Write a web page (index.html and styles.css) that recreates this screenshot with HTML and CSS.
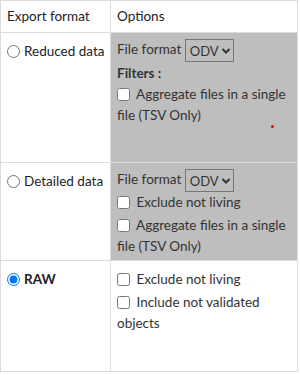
FILE: index.html
```html
<!DOCTYPE html>
<html lang="en">
<head>
    <meta charset="UTF-8">
    <meta name="viewport" content="width=device-width, initial-scale=1.0">
    <title>Export</title>
    <link rel="stylesheet" href="styles.css">
</head>
<body>
    <table class="export-table">
        <thead>
            <tr class="head-row">
                <th class="col-format">Export format</th>
                <th>Options</th>
            </tr>
        </thead>
        <tbody>
            <tr class="row-reduced">
                <td><label class="choice"><input type="radio" name="fmt"> Reduced data</label></td>
                <td class="options disabled">
                    <div class="line">File format
                        <span class="select-wrap">
                            <select><option>ODV</option></select>
                            <svg class="chevron" width="10" height="8" viewBox="0 0 10 8"><path d="M1.5 2 L5 5.5 L8.5 2" fill="none" stroke="#333" stroke-width="2"/></svg>
                        </span>
                    </div>
                    <div class="line filters">Filters :</div>
                    <label class="line check"><input type="checkbox"> Aggregate files in a single file (TSV Only)</label>
                    <span class="dot"></span>
                </td>
            </tr>
            <tr class="row-detailed">
                <td><label class="choice"><input type="radio" name="fmt"> Detailed data</label></td>
                <td class="options disabled">
                    <div class="line">File format
                        <span class="select-wrap">
                            <select><option>ODV</option></select>
                            <svg class="chevron" width="10" height="8" viewBox="0 0 10 8"><path d="M1.5 2 L5 5.5 L8.5 2" fill="none" stroke="#333" stroke-width="2"/></svg>
                        </span>
                    </div>
                    <label class="line check"><input type="checkbox"> Exclude not living</label>
                    <label class="line check"><input type="checkbox"> Aggregate files in a single file (TSV Only)</label>
                </td>
            </tr>
            <tr class="row-raw">
                <td><label class="choice selected"><input type="radio" name="fmt" checked> RAW</label></td>
                <td class="options">
                    <label class="line check"><input type="checkbox"> Exclude not living</label>
                    <label class="line check"><input type="checkbox"> Include not validated objects</label>
                </td>
            </tr>
        </tbody>
    </table>
</body>
</html>
```

FILE: styles.css
```css
body {
    margin: 0;
    background-color: white;
    color: #333;
    font-family: Lato, "Noto Sans", sans-serif;
    font-size: 13.5px;
    line-height: 21px;
}

.export-table {
    width: 298px;
    table-layout: fixed;
    border-collapse: collapse;
    border: 1px solid #dcdcdc;
}

.export-table th,
.export-table td {
    border: 1px solid #dcdcdc;
    padding: 0 4px 0 6px;
    vertical-align: top;
    text-align: left;
}

.export-table th {
    font-weight: normal;
    color: #222;
    height: 31px;
    vertical-align: middle;
}

.col-format {
    width: 99px; /* left column, divider at x=109 */
}

.export-table td {
    padding-top: 6px;
}

.row-reduced td { height: 123px; }
.row-detailed td { height: 91px; }
.row-raw td { height: 104px; }

.row-raw .options {
    padding-top: 8px;
    height: 102px;
}

.choice {
    display: flex;
    align-items: center;
    gap: 4px;
    margin-top: 2px;
    color: #222;
    white-space: nowrap;
}

.choice input {
    margin: 0;
    width: 13px;
    height: 13px;
}

.choice.selected {
    font-weight: bold;
}

.options {
    position: relative;
}

.options.disabled {
    background-color: #bebebe;
}

.line {
    display: block;
}

.filters {
    font-weight: bold;
    margin-top: 1px;
}

.check + .check {
    margin-top: 2px;
}

.check input {
    margin: 0 3px 0 0;
    width: 13px;
    height: 13px;
    vertical-align: -2px;
}

.select-wrap {
    position: relative;
    display: inline-block;
    vertical-align: middle;
}

.select-wrap select {
    appearance: none;
    -webkit-appearance: none;
    font-family: inherit;
    font-size: 13px;
    color: #333;
    background: transparent;
    border: 1px solid #777;
    border-radius: 0;
    height: 23px;
    width: 49px;
    padding: 0 0 0 4px;
    margin: 0;
}

.chevron {
    position: absolute;
    right: 3px;
    top: 8px;
    pointer-events: none;
}

.dot {
    position: absolute;
    left: 160px;
    top: 92px;
    width: 3px;
    height: 3px;
    border-radius: 50%;
    background-color: #e00;
}
```
